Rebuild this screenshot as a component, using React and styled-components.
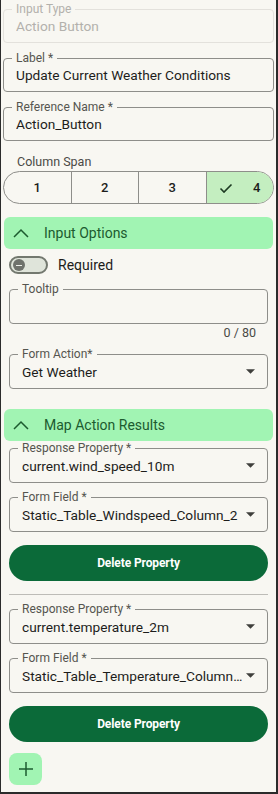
import styled, { createGlobalStyle } from 'styled-components';

const GlobalStyle = createGlobalStyle`
  html, body {
    margin: 0;
    padding: 0;
    background: #f8f7f2;
  }
  * {
    box-sizing: border-box;
  }
`;

const Panel = styled.div`
  width: 278px;
  height: 794px;
  background: #f8f7f2;
  border-left: 1px solid #2b2b2b;
  border-right: 2px solid #2b2b2b;
  border-bottom: 2px solid #2b2b2b;
  font-family: Roboto, "Liberation Sans", sans-serif;
  color: #1d1d1b;
  display: flex;
  flex-direction: column;
  overflow: hidden;
`;

const Group = styled.div`
  display: flex;
  flex-direction: column;
  padding: 0 ${(p) => p.$inset}px;
`;

const Field = styled.div`
  position: relative;
  height: ${(p) => p.$h || 35}px;
  margin-top: ${(p) => p.$mt || 0}px;
  border: 1px solid ${(p) => (p.$disabled ? '#e3e1dc' : '#8e8e8a')};
  border-radius: 4px;
  display: flex;
  align-items: center;
  gap: 2px;
  padding: 0 12px 0 12px;
`;

const FieldLabel = styled.span`
  position: absolute;
  top: -8px;
  left: 8px;
  padding: 0 4px;
  background: #f8f7f2;
  font-size: 12px;
  line-height: 14px;
  color: ${(p) => (p.$disabled ? '#b3b1ac' : '#55554f')};
  white-space: nowrap;
`;

const Value = styled.span`
  flex: 1;
  min-width: 0;
  font-size: 13.7px;
  line-height: 18px;
  color: ${(p) => (p.$disabled ? '#b3b1ac' : '#1d1d1b')};
  white-space: nowrap;
  overflow: hidden;
  text-overflow: ellipsis;
`;

const Caret = styled.svg`
  flex: none;
  width: 9px;
  height: 5px;
  fill: #3f3f3c;
`;

const Caption = styled.div`
  margin-top: ${(p) => p.$mt || 0}px;
  padding: 0 ${(p) => p.$pr || 0}px 0 ${(p) => p.$pl || 0}px;
  text-align: ${(p) => p.$align || 'left'};
  font-size: 12.5px;
  line-height: 16px;
  color: #4a4a46;
`;

const Segmented = styled.div`
  display: flex;
  height: 33px;
  margin-top: 1px;
  border: 1px solid #8e8e8a;
  border-radius: 999px;
  overflow: hidden;
`;

const Segment = styled.div`
  flex: 1;
  display: flex;
  align-items: center;
  justify-content: center;
  gap: 20px;
  font-size: 13px;
  font-weight: 500;
  color: #1d1d1b;
  background: ${(p) => (p.$active ? '#c4eec0' : 'transparent')};
  border-left: ${(p) => (p.$first ? 'none' : '1px solid #8e8e8a')};

  svg {
    width: 14px;
    height: 14px;
    stroke: #1d3a22;
    fill: none;
    stroke-width: 1.6;
  }
`;

const SectionHeader = styled.div`
  display: flex;
  align-items: center;
  height: 32px;
  margin: ${(p) => p.$mt}px 3px 0 3px;
  padding-left: 9px;
  gap: 15px;
  border-radius: 6px;
  background: #a1f4b3;
  color: #1c5b2f;
  font-size: 14px;

  svg {
    width: 16px;
    height: 10px;
    stroke: #1c5b2f;
    fill: none;
    stroke-width: 1.5;
  }
`;

const ToggleRow = styled.label`
  display: flex;
  align-items: center;
  gap: 10px;
  margin-top: 7px;
  font-size: 14px;
  color: #1d1d1b;
`;

const Track = styled.span`
  position: relative;
  width: 39px;
  height: 18px;
  border: 2px solid #73786f;
  border-radius: 999px;
  background: #dfe4da;
`;

const Thumb = styled.span`
  position: absolute;
  left: 2px;
  top: 1px;
  width: 12px;
  height: 12px;
  border-radius: 50%;
  background: #6f726c;

  &::after {
    content: '';
    position: absolute;
    left: 3px;
    top: 5.5px;
    width: 6px;
    height: 1.5px;
    background: #eef0ea;
  }
`;

const DangerButton = styled.button`
  height: 36px;
  margin-top: ${(p) => p.$mt}px;
  border: none;
  border-radius: 999px;
  background: #0b6a39;
  color: #ffffff;
  font-family: Roboto, "Liberation Sans", sans-serif;
  font-size: 12px;
  font-weight: 700;
  letter-spacing: -0.1px;
`;

const Divider = styled.hr`
  margin: 13px 0 0;
  border: none;
  border-top: 1px solid #bdbcb7;
`;

const AddButton = styled.button`
  width: 33px;
  height: 32px;
  margin-top: 11px;
  border: none;
  border-radius: 8px;
  background: #a1f4b3;
  display: flex;
  align-items: center;
  justify-content: center;
  padding: 0;

  svg {
    width: 16px;
    height: 16px;
    stroke: #1c5b2f;
    stroke-width: 1.5;
  }
`;

function CaretIcon() {
  return (
    <Caret viewBox="0 0 10 5">
      <path d="M0 0l5 5 5-5z" />
    </Caret>
  );
}

function ChevronUp() {
  return (
    <svg viewBox="0 0 16 10">
      <polyline points="1,9 8,2 15,9" />
    </svg>
  );
}

function TextField({ label, value, disabled, select, mt, h }) {
  return (
    <Field $disabled={disabled} $mt={mt} $h={h}>
      <FieldLabel $disabled={disabled}>{label}</FieldLabel>
      <Value $disabled={disabled}>{value}</Value>
      {select && <CaretIcon />}
    </Field>
  );
}

function MappingBlock({ property, field, first }) {
  return (
    <>
      <TextField label="Response Property *" value={property} select mt={first ? 7 : 14} />
      <TextField label="Form Field *" value={field} select mt={14} />
      <DangerButton $mt={13}>Delete Property</DangerButton>
    </>
  );
}

export default function App() {
  const spans = [1, 2, 3, 4];
  return (
    <>
      <GlobalStyle />
      <Panel>
        <Group $inset={2}>
          <TextField label="Input Type" value="Action Button" disabled mt={9} h={34} />
          <TextField label="Label *" value="Update Current Weather Conditions" mt={15} h={34} />
          <TextField label="Reference Name *" value="Action_Button" mt={15} h={34} />
          <Caption $mt={13} $pl={14}>Column Span</Caption>
          <Segmented>
            {spans.map((n) => (
              <Segment key={n} $first={n === 1} $active={n === 4}>
                {n === 4 && (
                  <svg viewBox="0 0 14 14">
                    <polyline points="1.5,7.5 5,11 12.5,3.5" />
                  </svg>
                )}
                {n}
              </Segment>
            ))}
          </Segmented>
        </Group>

        <SectionHeader $mt={13}>
          <ChevronUp />
          Input Options
        </SectionHeader>

        <Group $inset={8}>
          <ToggleRow>
            <Track>
              <Thumb />
            </Track>
            Required
          </ToggleRow>
          <TextField label="Tooltip" value="" mt={15} />
          <Caption $mt={1} $align="right" $pr={12}>0 / 80</Caption>
          <TextField label="Form Action*" value="Get Weather" select mt={13} />
        </Group>

        <SectionHeader $mt={20}>
          <ChevronUp />
          Map Action Results
        </SectionHeader>

        <Group $inset={8}>
          <MappingBlock
            first
            property="current.wind_speed_10m"
            field="Static_Table_Windspeed_Column_2"
          />
          <Divider />
          <MappingBlock
            property="current.temperature_2m"
            field="Static_Table_Temperature_Column_3"
          />
          <AddButton>
            <svg viewBox="0 0 16 16">
              <line x1="8" y1="1" x2="8" y2="15" />
              <line x1="1" y1="8" x2="15" y2="8" />
            </svg>
          </AddButton>
        </Group>
      </Panel>
    </>
  );
}
